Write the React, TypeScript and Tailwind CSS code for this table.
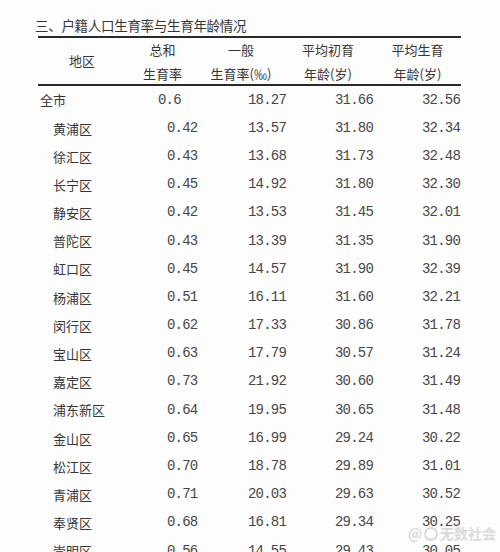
import React from "react";

const rows = [
  { name: "全市", tfr: "0.6", gfr: "18.27", first: "31.66", avg: "32.56", city: true },
  { name: "黄浦区", tfr: "0.42", gfr: "13.57", first: "31.80", avg: "32.34" },
  { name: "徐汇区", tfr: "0.43", gfr: "13.68", first: "31.73", avg: "32.48" },
  { name: "长宁区", tfr: "0.45", gfr: "14.92", first: "31.80", avg: "32.30" },
  { name: "静安区", tfr: "0.42", gfr: "13.53", first: "31.45", avg: "32.01" },
  { name: "普陀区", tfr: "0.43", gfr: "13.39", first: "31.35", avg: "31.90" },
  { name: "虹口区", tfr: "0.45", gfr: "14.57", first: "31.90", avg: "32.39" },
  { name: "杨浦区", tfr: "0.51", gfr: "16.11", first: "31.60", avg: "32.21" },
  { name: "闵行区", tfr: "0.62", gfr: "17.33", first: "30.86", avg: "31.78" },
  { name: "宝山区", tfr: "0.63", gfr: "17.79", first: "30.57", avg: "31.24" },
  { name: "嘉定区", tfr: "0.73", gfr: "21.92", first: "30.60", avg: "31.49" },
  { name: "浦东新区", tfr: "0.64", gfr: "19.95", first: "30.65", avg: "31.48" },
  { name: "金山区", tfr: "0.65", gfr: "16.99", first: "29.24", avg: "30.22" },
  { name: "松江区", tfr: "0.70", gfr: "18.78", first: "29.89", avg: "31.01" },
  { name: "青浦区", tfr: "0.71", gfr: "20.03", first: "29.63", avg: "30.52" },
  { name: "奉贤区", tfr: "0.68", gfr: "16.81", first: "29.34", avg: "30.25" },
  { name: "崇明区", tfr: "0.56", gfr: "14.55", first: "29.43", avg: "30.05" },
];

const cjk = "font-['Noto_Sans_CJK_SC',sans-serif]";
const num = "font-['Liberation_Mono',monospace] text-[14px] tracking-[-0.8px] text-[#474747]";
const cols = "grid grid-cols-[87px_75px_82px_92px_87px]";

export default function App() {
  return (
    <div className="relative w-[500px] h-[552px] overflow-hidden bg-[#fdfdfd] text-[#363636]">
      {/* Title */}
      <div className={`${cjk} h-[36px] pt-[15px] pl-[35px] text-[13.5px] leading-[20px] tracking-[-0.3px]`}>
        三、户籍人口生育率与生育年龄情况
      </div>

      <div className="ml-[38px] w-[423px]">
        {/* Header */}
        <div className={`${cols} ${cjk} h-[50px] border-t-2 border-b-2 border-[#2a2a2a] text-[13px] leading-[24px]`}>
          <div className="flex items-center justify-center pl-[1px] pb-[2px]">地区</div>
          <div className="flex flex-col items-center">
            <span>总和</span>
            <span>生育率</span>
          </div>
          <div className="flex flex-col items-center">
            <span>一般</span>
            <span>生育率(‰)</span>
          </div>
          <div className="flex flex-col items-center">
            <span>平均初育</span>
            <span>年龄(岁)</span>
          </div>
          <div className="flex flex-col items-center">
            <span>平均生育</span>
            <span>年龄(岁)</span>
          </div>
        </div>

        {/* Rows */}
        {rows.map((r) => (
          <div key={r.name} className={`${cols} h-[28.2px] items-center`}>
            <div className={`${cjk} text-[13px] ${r.city ? "pl-[2px]" : "pl-[15px]"}`}>{r.name}</div>
            <div className={`${num} ${r.city ? "pl-[33px]" : "pl-[42px]"}`}>{r.tfr}</div>
            <div className={`${num} pl-[48px]`}>{r.gfr}</div>
            <div className={`${num} pl-[53px]`}>{r.first}</div>
            <div className={`${num} pl-[48px]`}>{r.avg}</div>
          </div>
        ))}
      </div>

      {/* Watermark */}
      <div className={`${cjk} absolute left-[408px] top-[523px] flex items-center gap-[2px] text-[14px] font-bold text-[#dadada] [text-shadow:0_0_1px_#ffffff]`}>
        <span>@</span>
        <span className="inline-block w-[14px] h-[14px] rounded-full border-2 border-[#dadada]" />
        <span>无数社会</span>
      </div>
    </div>
  );
}
